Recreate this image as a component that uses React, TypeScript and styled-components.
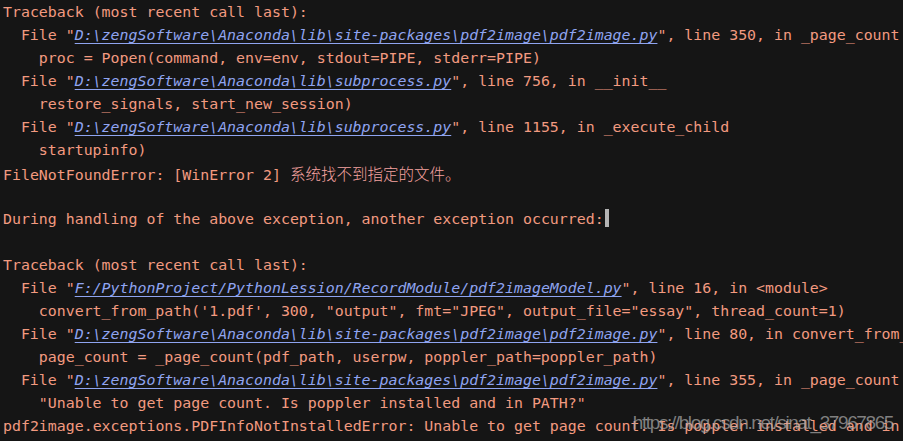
import React from "react";
import styled, { createGlobalStyle } from "styled-components";

const Global = createGlobalStyle`
  html, body { margin: 0; padding: 0; background: #151515; }
  body { width: 903px; height: 441px; overflow: hidden; }
`;

const Screen = styled.div`
  position: relative;
  width: 903px;
  height: 441px;
  background: #151515;
  overflow: hidden;
`;

const Console = styled.div`
  display: flex;
  flex-direction: column;
  padding: 1px 0 0 3px;
  font-family: "DejaVu Sans Mono", "Noto Sans CJK SC", monospace;
  font-size: 14.9px;
  line-height: 23px;
  color: #f29a80;
  white-space: pre;
`;

const Line = styled.div<{ $indent?: number }>`
  height: 23px;
  padding-left: ${(p) => (p.$indent ?? 0) * 8.96}px;
`;

const PathLink = styled.span`
  color: #8fa4f0;
  font-style: italic;
  text-decoration: underline;
  text-decoration-thickness: 1px;
  text-underline-offset: 3px;
`;

const Cjk = styled.span`
  font-family: "Noto Sans CJK SC", sans-serif;
  font-size: 15.5px;
  font-weight: 300;
  color: #f5a3a0;
`;

const Cursor = styled.span`
  display: inline-block;
  width: 4px;
  height: 18px;
  background: #b4b4b4;
  vertical-align: -3px;
  margin-left: 1px;
`;

const Watermark = styled.div`
  position: absolute;
  right: 10px;
  bottom: 7px;
  font-family: "Liberation Sans", Arial, sans-serif;
  font-size: 19px;
  letter-spacing: -1.4px;
  color: rgba(170, 170, 170, 0.72);
  pointer-events: none;
`;

const FileRef = ({ path, rest }: { path: string; rest: string }) => (
  <Line $indent={2}>
    File "<PathLink>{path}</PathLink>"{rest}
  </Line>
);

const site = "D:\\zengSoftware\\Anaconda\\lib\\site-packages\\pdf2image\\pdf2image.py";
const sub = "D:\\zengSoftware\\Anaconda\\lib\\subprocess.py";

export default function App() {
  return (
    <Screen>
      <Global />
      <Console>
        <Line>Traceback (most recent call last):</Line>
        <FileRef path={site} rest=", line 350, in _page_count" />
        <Line $indent={4}>proc = Popen(command, env=env, stdout=PIPE, stderr=PIPE)</Line>
        <FileRef path={sub} rest=", line 756, in __init__" />
        <Line $indent={4}>restore_signals, start_new_session)</Line>
        <FileRef path={sub} rest=", line 1155, in _execute_child" />
        <Line $indent={4}>startupinfo)</Line>
        <Line>
          FileNotFoundError: [WinError 2] <Cjk>系统找不到指定的文件。</Cjk>
        </Line>
        <Line />
        <Line>
          During handling of the above exception, another exception occurred:<Cursor />
        </Line>
        <Line />
        <Line>Traceback (most recent call last):</Line>
        <FileRef
          path="F:/PythonProject/PythonLession/RecordModule/pdf2imageModel.py"
          rest=", line 16, in <module>"
        />
        <Line $indent={4}>
          convert_from_path('1.pdf', 300, "output", fmt="JPEG", output_file="essay", thread_count=1)
        </Line>
        <FileRef path={site} rest=", line 80, in convert_from_path" />
        <Line $indent={4}>page_count = _page_count(pdf_path, userpw, poppler_path=poppler_path)</Line>
        <FileRef path={site} rest=", line 355, in _page_count" />
        <Line $indent={4}>"Unable to get page count. Is poppler installed and in PATH?"</Line>
        <Line>
          pdf2image.exceptions.PDFInfoNotInstalledError: Unable to get page count. Is poppler installed and in PATH?
        </Line>
      </Console>
      <Watermark>https://blog.csdn.net/sinat_37967865</Watermark>
    </Screen>
  );
}
